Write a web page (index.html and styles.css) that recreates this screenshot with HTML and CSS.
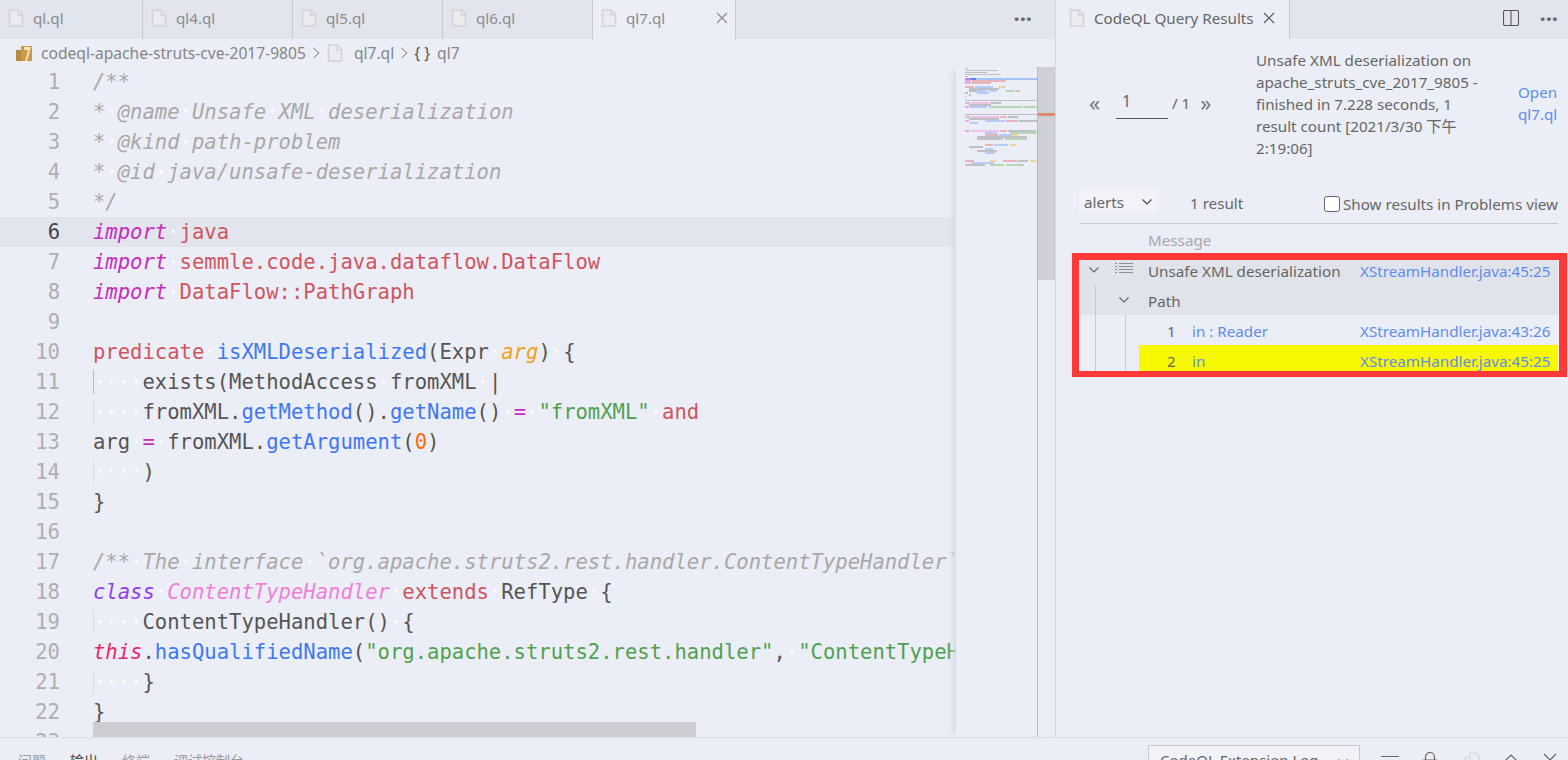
FILE: index.html
```html
<!DOCTYPE html>
<html lang="en">
<head>
  <meta charset="UTF-8">
  <title>ql7.ql - CodeQL Query Results</title>
  <link rel="stylesheet" href="styles.css">
</head>
<body>
  <svg class="defs" width="0" height="0">
    <symbol id="file" viewBox="0 0 16 18">
      <path d="M1.5 1h9l4 4v12h-13z" fill="#e9ebef" stroke="#d3d4d6" stroke-width="1.6"/>
      <path d="M10 1v5h5" fill="none" stroke="#d3d4d6" stroke-width="1.4"/>
    </symbol>
    <symbol id="close" viewBox="0 0 12 12">
      <path d="M1 1l10 10M11 1L1 11" fill="none" stroke="currentColor" stroke-width="1.1"/>
    </symbol>
    <symbol id="chev" viewBox="0 0 12 12">
      <path d="M1.5 3.5L6 8l4.5-4.5" fill="none" stroke="currentColor" stroke-width="1.1"/>
    </symbol>
  </svg>

  <div class="workbench">
    <div class="editor-group">
      <div class="tabs">
        <div class="tab first"><svg class="file-icon"><use href="#file"/></svg>ql.ql</div>
        <div class="tab"><svg class="file-icon"><use href="#file"/></svg>ql4.ql</div>
        <div class="tab"><svg class="file-icon"><use href="#file"/></svg>ql5.ql</div>
        <div class="tab"><svg class="file-icon"><use href="#file"/></svg>ql6.ql</div>
        <div class="tab active"><svg class="file-icon"><use href="#file"/></svg><span class="tab-name">ql7.ql</span><svg class="tab-close"><use href="#close"/></svg></div>
        <div class="tabs-rest"><span class="dots">···</span></div>
      </div>

      <div class="crumbs">
        <svg class="crumb-logo" viewBox="0 0 17 17">
          <rect x="0" y="5" width="11" height="11" fill="#b8893f"/>
          <rect x="5" y="1" width="11" height="15" fill="#c99a4e"/>
          <path d="M8 2h7l-4 14H9l3-11H8z" fill="#f6e3b0"/>
        </svg>
        <span>codeql-apache-struts-cve-2017-9805</span>
        <svg class="crumb-sep" viewBox="0 0 8 12"><path d="M1.5 1L7 6l-5.5 5" fill="none" stroke="#777" stroke-width="1"/></svg>
        <svg class="file-icon crumb-file"><use href="#file"/></svg>
        <span>ql7.ql</span>
        <svg class="crumb-sep" viewBox="0 0 8 12"><path d="M1.5 1L7 6l-5.5 5" fill="none" stroke="#777" stroke-width="1"/></svg>
        <span class="crumb-braces">{ }</span>
        <span>ql7</span>
      </div>

      <div class="editor">
        <div class="code">
          <div class="line"><span class="ln">1</span><span class="c">/**</span></div>
          <div class="line"><span class="ln">2</span><span class="c">*<i>·</i>@name<i>·</i>Unsafe<i>·</i>XML<i>·</i>deserialization</span></div>
          <div class="line"><span class="ln">3</span><span class="c">*<i>·</i>@kind<i>·</i>path-problem</span></div>
          <div class="line"><span class="ln">4</span><span class="c">*<i>·</i>@id<i>·</i>java/unsafe-deserialization</span></div>
          <div class="line"><span class="ln">5</span><span class="c">*/</span></div>
          <div class="line current"><span class="ln">6</span><span class="k">import</span><i>·</i><span class="r">java</span></div>
          <div class="line"><span class="ln">7</span><span class="k">import</span><i>·</i><span class="r">semmle.code.java.dataflow.DataFlow</span></div>
          <div class="line"><span class="ln">8</span><span class="k">import</span><i>·</i><span class="r">DataFlow::PathGraph</span></div>
          <div class="line"><span class="ln">9</span></div>
          <div class="line"><span class="ln">10</span><span class="r">predicate</span><i>·</i><span class="f">isXMLDeserialized</span>(Expr<i>·</i><span class="p">arg</span>)<i>·</i>{</div>
          <div class="line"><span class="ln">11</span><i class="ind dark">····</i>exists(MethodAccess<i>·</i>fromXML<i>·</i>|</div>
          <div class="line"><span class="ln">12</span><i class="ind">····</i>fromXML.<span class="f">getMethod</span>().<span class="f">getName</span>()<i>·</i><span class="o">=</span><i>·</i><span class="s">"fromXML"</span><i>·</i><span class="r">and</span></div>
          <div class="line"><span class="ln">13</span>arg<i>·</i><span class="o">=</span><i>·</i>fromXML.<span class="f">getArgument</span>(<span class="n">0</span>)</div>
          <div class="line"><span class="ln">14</span><i class="ind">····</i>)</div>
          <div class="line"><span class="ln">15</span>}</div>
          <div class="line"><span class="ln">16</span></div>
          <div class="line"><span class="ln">17</span><span class="c">/**<i>·</i>The<i>·</i>interface<i>·</i>`org.apache.struts2.rest.handler.ContentTypeHandler`.<i>·</i>*/</span></div>
          <div class="line"><span class="ln">18</span><span class="kc">class</span><i>·</i><span class="t">ContentTypeHandler</span><i>·</i><span class="r">extends</span><i>·</i>RefType<i>·</i>{</div>
          <div class="line"><span class="ln">19</span><i class="ind">····</i>ContentTypeHandler()<i>·</i>{</div>
          <div class="line"><span class="ln">20</span><span class="th">this</span>.<span class="f">hasQualifiedName</span>(<span class="s">"org.apache.struts2.rest.handler"</span>,<i>·</i><span class="s">"ContentTypeHandler"</span>)</div>
          <div class="line"><span class="ln">21</span><i class="ind">····</i>}</div>
          <div class="line"><span class="ln">22</span>}</div>
          <div class="line"><span class="ln">23</span></div>
          <div class="hscroll"></div>
        </div>

        <div class="minimap">
          <svg width="81" height="110" viewBox="956 67 81 110">
            <g fill="#b4b4b8">
              <rect x="965" y="68" width="3" height="1"/>
              <rect x="965" y="70" width="33" height="1"/>
              <rect x="965" y="72" width="22" height="1"/>
              <rect x="965" y="74" width="36" height="1"/>
              <rect x="965" y="76" width="3" height="1"/>
              <rect x="965" y="100" width="72" height="1"/>
              <rect x="965" y="114" width="72" height="1"/>
            </g>
            <rect x="965" y="78" width="72" height="2" fill="#92b8f6"/>
            <rect x="965" y="78" width="6" height="2" fill="#a36be8"/>
            <rect x="971" y="78" width="5" height="2" fill="#2f6fe8"/>
            <g fill="#e3a0e0">
              <rect x="965" y="80" width="6" height="2"/>
              <rect x="965" y="82" width="6" height="2"/>
              <rect x="965" y="102" width="5" height="2"/>
              <rect x="965" y="106" width="4" height="2"/>
              <rect x="965" y="116" width="5" height="2"/>
              <rect x="965" y="120" width="4" height="2"/>
              <rect x="965" y="130" width="5" height="2"/>
            </g>
            <g fill="#e7a6ac">
              <rect x="972" y="80" width="34" height="2"/>
              <rect x="972" y="82" width="19" height="2"/>
              <rect x="965" y="86" width="9" height="2"/>
              <rect x="1016" y="90" width="4" height="2"/>
              <rect x="990" y="102" width="7" height="2"/>
              <rect x="1000" y="116" width="7" height="2"/>
              <rect x="1006" y="120" width="12" height="2"/>
              <rect x="1000" y="130" width="7" height="2"/>
              <rect x="985" y="134" width="13" height="2"/>
              <rect x="985" y="144" width="8" height="2"/>
              <rect x="965" y="160" width="9" height="2"/>
              <rect x="1003" y="160" width="14" height="2"/>
            </g>
            <g fill="#a9c4f6">
              <rect x="975" y="86" width="18" height="2"/>
              <rect x="977" y="90" width="10" height="2"/>
              <rect x="989" y="90" width="8" height="2"/>
              <rect x="977" y="92" width="12" height="2"/>
              <rect x="970" y="106" width="17" height="2"/>
              <rect x="985" y="120" width="20" height="2"/>
              <rect x="970" y="122" width="8" height="2"/>
              <rect x="985" y="132" width="12" height="2"/>
              <rect x="999" y="134" width="14" height="2"/>
              <rect x="994" y="144" width="14" height="2"/>
              <rect x="985" y="148" width="8" height="2"/>
              <rect x="985" y="152" width="10" height="2"/>
              <rect x="972" y="162" width="22" height="2"/>
            </g>
            <g fill="#b5b5ba">
              <rect x="999" y="86" width="6" height="2"/>
              <rect x="969" y="88" width="30" height="2"/>
              <rect x="969" y="90" width="8" height="2"/>
              <rect x="965" y="92" width="3" height="2"/>
              <rect x="969" y="94" width="2" height="2"/>
              <rect x="965" y="96" width="1" height="2"/>
              <rect x="991" y="102" width="10" height="2"/>
              <rect x="969" y="104" width="22" height="2"/>
              <rect x="1008" y="116" width="10" height="2"/>
              <rect x="969" y="118" width="30" height="2"/>
              <rect x="1019" y="120" width="18" height="2"/>
              <rect x="1008" y="130" width="28" height="2"/>
              <rect x="977" y="136" width="50" height="2"/>
              <rect x="977" y="138" width="26" height="2"/>
              <rect x="969" y="146" width="14" height="2"/>
              <rect x="977" y="150" width="20" height="2"/>
              <rect x="965" y="164" width="20" height="2"/>
              <rect x="1018" y="160" width="10" height="2"/>
            </g>
            <g fill="#a8d3a8">
              <rect x="1006" y="90" width="9" height="2"/>
              <rect x="989" y="106" width="34" height="2"/>
              <rect x="1024" y="106" width="13" height="2"/>
              <rect x="1010" y="132" width="27" height="2"/>
              <rect x="1005" y="138" width="22" height="2"/>
              <rect x="990" y="164" width="14" height="2"/>
              <rect x="1006" y="164" width="18" height="2"/>
            </g>
            <g fill="#f1cf8c">
              <rect x="1000" y="86" width="4" height="2"/>
              <rect x="1012" y="134" width="6" height="2"/>
              <rect x="1010" y="144" width="6" height="2"/>
              <rect x="990" y="160" width="6" height="2"/>
              <rect x="1030" y="160" width="6" height="2"/>
            </g>
            <g fill="#f0b8e8">
              <rect x="971" y="102" width="18" height="2"/>
              <rect x="971" y="116" width="28" height="2"/>
              <rect x="971" y="130" width="28" height="2"/>
            </g>
          </svg>
        </div>

        <div class="vscroll"><div class="vthumb"></div><div class="vmark"></div></div>
      </div>
    </div>

    <div class="results-group">
      <div class="tabs">
        <div class="tab results-tab"><svg class="file-icon"><use href="#file"/></svg><span class="tab-name">CodeQL Query Results</span><svg class="tab-close"><use href="#close"/></svg></div>
        <div class="tabs-rest">
          <svg class="split-icon" viewBox="0 0 16 16"><rect x="0.5" y="0.5" width="15" height="15" rx="1.5" fill="none" stroke="#555" stroke-width="1.1"/><path d="M8 1v14" stroke="#555" stroke-width="1.1"/></svg>
          <span class="dots">···</span>
        </div>
      </div>

      <div class="results">
        <div class="query-head">
          <div class="pager">
            <span class="page-arrow">«</span>
            <span class="page-input">1</span>
            <span class="page-total">/ 1</span>
            <span class="page-arrow next">»</span>
          </div>
          <div class="query-info">Unsafe XML deserialization on apache_struts_cve_2017_9805 - finished in 7.228 seconds, 1 result count [2021/3/30 下午 2:19:06]</div>
          <a class="open-link">Open ql7.ql</a>
        </div>

        <div class="toolbar">
          <div class="select">alerts<svg class="select-chev"><use href="#chev"/></svg></div>
          <span class="count">1 result</span>
          <label class="problems"><span class="checkbox"></span>Show results in Problems view</label>
        </div>

        <div class="table-head">Message</div>
        <div class="table">
          <div class="row open">
            <svg class="row-chev"><use href="#chev"/></svg>
            <svg class="list-icon" viewBox="0 0 18 14"><path d="M0 1.5h2M4 1.5h14M0 4.5h2M4 4.5h14M0 7.5h2M4 7.5h14M0 10.5h2M4 10.5h14" stroke="#8d8f96" stroke-width="1"/></svg>
            <span class="msg">Unsafe XML deserialization</span>
            <a class="loc">XStreamHandler.java:45:25</a>
          </div>
          <div class="row open">
            <span class="guide g1"></span>
            <svg class="row-chev second"><use href="#chev"/></svg>
            <span class="msg">Path</span>
          </div>
          <div class="row">
            <span class="guide g1"></span><span class="guide g2"></span>
            <span class="step">1</span>
            <a class="step-msg">in : Reader</a>
            <a class="loc">XStreamHandler.java:43:26</a>
          </div>
          <div class="row">
            <span class="guide g1"></span><span class="guide g2"></span>
            <div class="hit">
              <span class="step">2</span>
              <a class="step-msg">in</a>
              <a class="loc">XStreamHandler.java:45:25</a>
            </div>
          </div>
          <div class="red-box"></div>
        </div>
      </div>
    </div>
  </div>

  <div class="panel">
    <div class="panel-tabs">
      <span>问题</span>
      <span class="on">输出</span>
      <span>终端</span>
      <span>调试控制台</span>
    </div>
    <div class="panel-tools">
      <div class="log-select">CodeQL Extension Log<svg class="log-chev"><use href="#chev"/></svg></div>
      <svg class="tool hamburger" viewBox="0 0 18 12"><path d="M0 1.5h18M0 6h18M0 10.5h18" stroke="#666" stroke-width="1.2"/></svg>
      <svg class="tool lock" viewBox="0 0 18 18"><path d="M4.5 8V5a4.5 4.5 0 0 1 9 0v3M2.5 8h13v9h-13z" fill="none" stroke="#666" stroke-width="1.2"/></svg>
      <svg class="tool" viewBox="0 0 18 18"><path d="M7 1h6l3 3v8h-9zM2 5h4M2 5v12h9v-3" fill="none" stroke="#d4d5da" stroke-width="1.2"/></svg>
      <svg class="tool" viewBox="0 0 18 18"><path d="M3 9l6-6 6 6" fill="none" stroke="#666" stroke-width="1.2"/></svg>
      <svg class="tool" viewBox="0 0 18 18"><path d="M3 2l12 12M15 2L3 14" fill="none" stroke="#666" stroke-width="1.2"/></svg>
    </div>
  </div>
</body>
</html>
```

FILE: styles.css
```css
html, body {
  margin: 0;
  height: 100%;
  overflow: hidden;
}
body {
  display: flex;
  flex-direction: column;
  background-color: #ebeef6;
  color: #666;
  font-family: "Noto Sans", "Noto Sans CJK SC", sans-serif;
  font-size: 15.2px;
}
.defs {
  position: absolute;
}
a {
  color: #5f8cef;
}

/* layout */
.workbench {
  display: flex;
  height: 737px;
  flex: none;
}
.editor-group {
  width: 1055px;
  flex: none;
  display: flex;
  flex-direction: column;
  border-right: 1px solid #d4d6dc;
}
.results-group {
  flex: 1;
  min-width: 0;
}

/* tabs */
.tabs {
  display: flex;
  height: 39px;
  background-color: #e2e5ed;
}
.tab {
  width: 150px;
  flex: none;
  box-sizing: border-box;
  display: flex;
  align-items: center;
  padding: 0 0 3px 8px;
  border-right: 1px solid #c8cad1;
  color: #8b8c90;
}
.tab.first {
  width: 143px;
}
.tab.active {
  width: 143px;
  background-color: #ebeef6;
}
.file-icon {
  width: 16px;
  height: 18px;
  margin-right: 9px;
  flex: none;
}
.tab-name {
  flex: 1;
}
.tab-close {
  width: 12px;
  height: 12px;
  margin-right: 7px;
  color: #8a8a8a;
}
.tabs-rest {
  flex: 1;
  display: flex;
  align-items: center;
  justify-content: flex-end;
  padding-bottom: 4px;
}
.dots {
  margin-right: 23px;
  font-size: 22px;
  line-height: 30px;
  font-weight: bold;
  color: #666;
}
.results-group .dots {
  margin-right: 10px;
}
.split-icon {
  width: 16px;
  height: 16px;
  margin-right: 20px;
}

/* breadcrumbs */
.crumbs {
  height: 28px;
  flex: none;
  display: flex;
  align-items: center;
  padding-left: 16px;
  color: #858588;
  font-size: 15.6px;
}
.crumb-logo {
  width: 17px;
  height: 17px;
  margin-right: 8px;
}
.crumb-sep {
  width: 8px;
  height: 12px;
  margin: 0 6px;
}
.crumb-file {
  margin-right: 11px;
  margin-left: 1px;
}
.crumb-braces {
  color: #555;
  margin-right: 7px;
}

/* editor */
.editor {
  flex: 1;
  min-height: 0;
  display: flex;
}
.code {
  width: 956px;
  flex: none;
  position: relative;
  overflow: hidden;
  font-family: "DejaVu Sans Mono", monospace;
  font-size: 20.56px;
  line-height: 30px;
  color: #555;
}
.line {
  height: 30px;
  white-space: pre;
}
.line.current {
  background-color: #e2e5ed;
}
.ln {
  display: inline-block;
  width: 60px;
  margin-right: 33px;
  text-align: right;
  color: #aeaeb0;
}
.current .ln {
  color: #444;
}
.line i {
  font-style: normal;
  color: #fff;
}
.ind {
  box-shadow: inset 1px 0 0 #d9dbe2;
}
.ind.dark {
  box-shadow: inset 1px 0 0 #b9bbc2;
}
.c {
  color: #a8a8a8;
  font-style: italic;
}
.k {
  color: #c62cc0;
  font-style: italic;
}
.kc {
  color: #8f3df0;
  font-style: italic;
}
.t {
  color: #f07fd8;
  font-style: italic;
}
.th {
  color: #f0246e;
  font-style: italic;
}
.p {
  color: #eea11a;
  font-style: italic;
}
.r {
  color: #cf5560;
}
.f {
  color: #4078f2;
}
.s {
  color: #50a14f;
}
.n {
  color: #ff6a00;
}
.o {
  color: #c62cc0;
}
.hscroll {
  position: absolute;
  left: 93px;
  top: 655px;
  width: 603px;
  height: 15px;
  background-color: #cdced4;
}
.minimap {
  width: 81px;
  flex: none;
  overflow: hidden;
  background-color: #ebeef6;
  box-shadow: -6px 0 6px -3px #d8dae2;
  position: relative;
}
.minimap svg {
  display: block;
  opacity: 0.8;
  filter: blur(0.4px);
}
.vscroll {
  flex: 1;
  position: relative;
  border-left: 1px solid #b8b9bf;
}
.vthumb {
  height: 213px;
  background-color: #cfd0d6;
}
.vmark {
  position: absolute;
  left: 0;
  right: 0;
  top: 46px;
  height: 3px;
  background-color: #e08a70;
}

/* results view */
.results-tab {
  width: 234px;
  background-color: #ebeef6;
  padding-left: 13px;
  color: #666;
}
.results-tab .file-icon {
  margin-right: 9px;
}
.results-tab .tab-close {
  margin-right: 14px;
  color: #555;
}
.results {
  padding: 0 10px 0 23px;
}
.query-head {
  display: flex;
  align-items: center;
  height: 130px;
}
.pager {
  width: 177px;
  flex: none;
  display: flex;
  align-items: center;
  padding-left: 10px;
  box-sizing: border-box;
}
.page-arrow {
  font-size: 22px;
  line-height: 22px;
  color: #777;
  width: 27px;
  margin-bottom: 5px;
}
.page-arrow.next {
  margin-left: 10px;
}
.page-input {
  width: 52px;
  height: 29px;
  box-sizing: border-box;
  padding-left: 6px;
  border-bottom: 1px solid #555;
  font-size: 16px;
  line-height: 23px;
}
.page-total {
  margin: 0 0 3px 4px;
}
.query-info {
  width: 228px;
  flex: none;
  line-height: 22px;
}
.open-link {
  margin: 0 0 2px auto;
  width: 40px;
  line-height: 22px;
}
.toolbar {
  display: flex;
  align-items: center;
  height: 34px;
  border-bottom: 1px solid #c8cad1;
  margin-top: 20px;
}
.select {
  width: 78px;
  height: 24px;
  box-sizing: border-box;
  flex: none;
  display: flex;
  align-items: center;
  justify-content: space-between;
  padding: 2px 4px 0 5px;
  background-color: #f1f3f9;
  margin-bottom: 11px;
}
.select-chev {
  width: 12px;
  height: 12px;
  color: #444;
}
.count {
  margin-left: 33px;
  margin-bottom: 7px;
}
.problems {
  margin-left: auto;
  display: flex;
  align-items: center;
  margin-bottom: 5px;
}
.checkbox {
  width: 14px;
  height: 14px;
  margin-right: 3px;
  border: 1px solid #666;
  border-radius: 3px;
  background-color: #fff;
}
.table-head {
  height: 31px;
  padding-left: 69px;
  line-height: 32px;
  color: #a8a8ac;
}
.table {
  position: relative;
}
.row {
  height: 30px;
  display: flex;
  align-items: center;
  position: relative;
}
.row.open {
  background-color: #e0e3ea;
}
.row-chev {
  width: 12px;
  height: 12px;
  margin-left: 9px;
  color: #666;
}
.row-chev.second {
  margin-left: 39px;
}
.list-icon {
  width: 18px;
  height: 14px;
  margin-left: 15px;
  margin-bottom: 3px;
}
.msg {
  position: absolute;
  left: 69px;
  margin-top: 1px;
}
.loc {
  position: absolute;
  left: 281px;
  margin-top: 1px;
}
.guide {
  position: absolute;
  top: 0;
  bottom: 0;
  width: 1px;
  background-color: #c8cad1;
}
.g1 {
  left: 16px;
}
.g2 {
  left: 46px;
}
.step {
  position: absolute;
  left: 88px;
  margin-top: 1px;
}
.step-msg {
  position: absolute;
  left: 113px;
  margin-top: 1px;
}
.hit {
  position: absolute;
  left: 60px;
  right: 0;
  top: 0;
  bottom: 0;
  background-color: #f8f800;
  display: flex;
  align-items: center;
}
.hit .step {
  left: 28px;
}
.hit .step-msg {
  left: 53px;
}
.hit .loc {
  left: 221px;
}
.red-box {
  position: absolute;
  left: -7px;
  right: -9px;
  top: -2px;
  bottom: -2px;
  border: 7px solid #ff3838;
  border-right-width: 8px;
  border-bottom-width: 6px;
  pointer-events: none;
}

/* bottom panel */
.panel {
  flex: 1;
  display: flex;
  justify-content: space-between;
  border-top: 1px solid #dcdee4;
  overflow: hidden;
  font-size: 14px;
}
.panel-tabs {
  display: flex;
  gap: 24px;
  padding: 12px 0 0 18px;
  color: #9a9a9e;
}
.panel-tabs .on {
  color: #444;
}
.panel-tools {
  display: flex;
  align-items: flex-start;
  padding: 7px 9px 0 0;
  font-size: 15px;
}
.log-select {
  width: 212px;
  height: 32px;
  box-sizing: border-box;
  padding: 4px 0 0 11px;
  border: 1px solid #c8cad1;
  background-color: #f1f3f9;
  display: flex;
  justify-content: space-between;
  margin-right: 21px;
}
.log-chev {
  width: 12px;
  height: 12px;
  margin: 6px 10px 0 0;
}
.tool {
  width: 18px;
  height: 18px;
  margin: 7px 21px 0 0;
  flex: none;
}
.tool.hamburger {
  margin-right: 22px;
}
.tool.lock {
  margin-right: 24px;
}
.tool:last-child {
  margin-right: 0;
}
```
